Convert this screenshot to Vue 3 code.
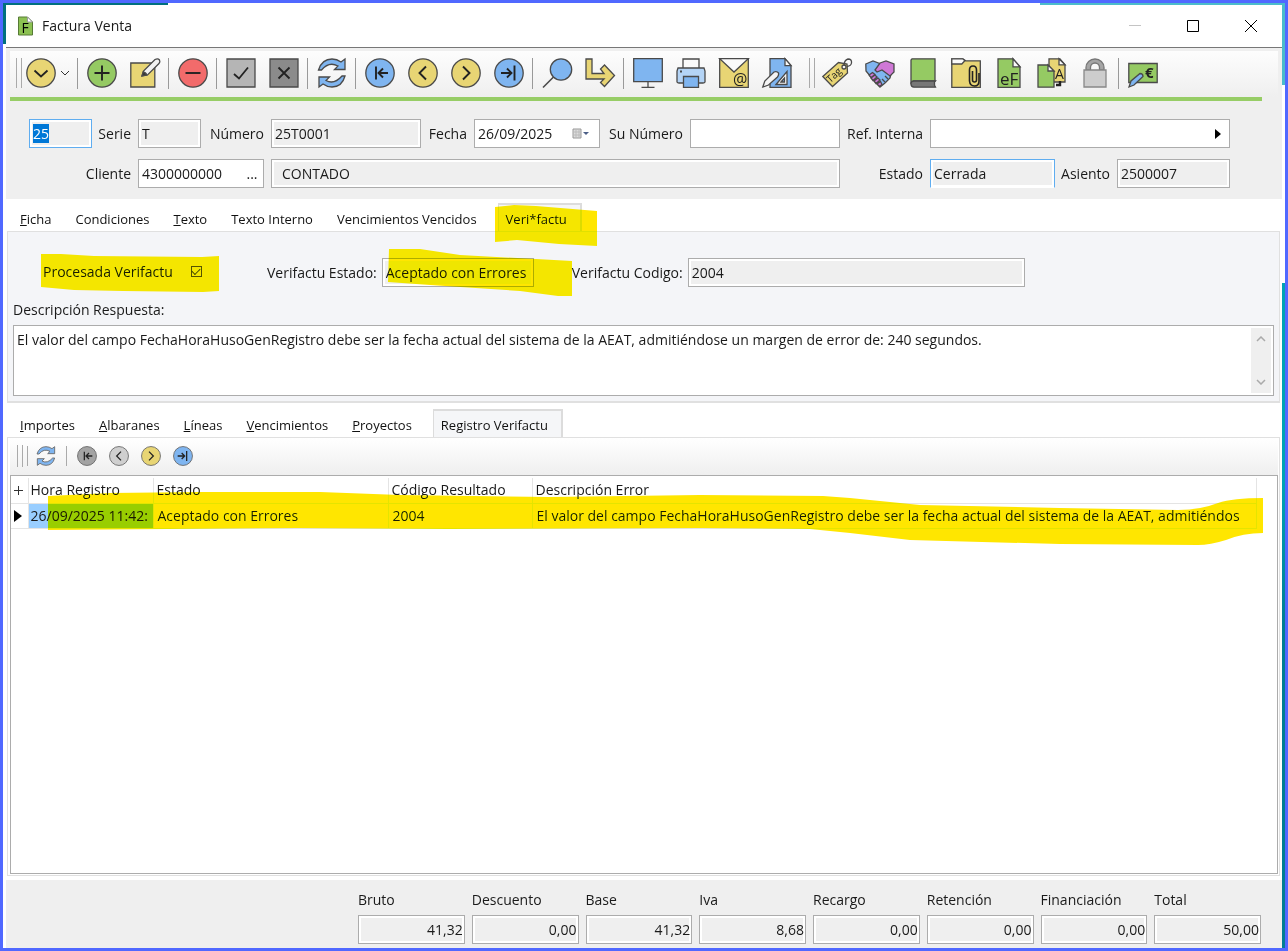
<script setup>
import { ref, onMounted } from 'vue'

const blue = '#7fb5f0'
const yellow = '#e8d574'
const green = '#95ca63'
const disc = (fill, inner) => `<circle cx="15" cy="15" r="14.2" fill="${fill}"/>${inner}`
const firstMark = '<path d="M11 8.500v13M23 15H14M18 10.500l-4.500 4.500 4.500 4.500" stroke="#222" stroke-width="1.900" fill="none"/>'
const lastMark = '<path d="M20.500 7.500v15M7 15h10M13 10.500l4.500 4.500-4.500 4.500" stroke="#222" stroke-width="1.900" fill="none"/>'
const prevMark = '<path d="M18 8.500L11.500 15l6.500 6.500" stroke="#222" stroke-width="1.900" fill="none"/>'
const nextMark = '<path d="M12 8.500l6.500 6.500-6.500 6.500" stroke="#222" stroke-width="1.900" fill="none"/>'

const art = {
  menu: disc(yellow, '<path d="M8.500 12.500l6.500 6 6.500-6" fill="none" stroke="#222" stroke-width="1.800"/>'),
  add: disc(green, '<path d="M15 7.500v15M7.500 15h15" stroke="#222" stroke-width="1.900"/>'),
  edit: `<path d="M.8 5h24v24H.8z" fill="${yellow}"/><path d="M12 18l1.500-5L25 1.500q3-1.500 4.500.5 1 2-.5 3.500L17.500 17z" fill="#f2f2f2"/><path d="M12 18l1.200-4q3 .5 3.500 3z" fill="#333"/>`,
  remove: disc('#f26b6b', '<path d="M7.500 15h15" stroke="#222" stroke-width="1.900"/>'),
  accept: '<path d="M1 1h28v28H1z" fill="#b5b5b5"/><path d="M8 16l5 4.500L22 9.500" fill="none" stroke="#222" stroke-width="1.800"/>',
  cancel: '<path d="M1 1h28v28H1z" fill="#8b8b8b"/><path d="M9.500 9.500l11 11M20.500 9.500l-11 11" stroke="#222" stroke-width="1.800"/>',
  refresh: `<path d="M1.500 12Q5 1 15 1q5 0 9 3l4-3v10.500H17.500l3.500-3.500Q12 3 4.500 12z" fill="${blue}"/><path d="M28 18Q25 29 15 29q-5 0-9-3l-4 3V19h10.500L9 22.500Q17 27 25 18z" fill="${blue}"/>`,
  first: disc(blue, firstMark),
  prev: disc(yellow, prevMark),
  next: disc(yellow, nextMark),
  last: disc(blue, lastMark),
  firstOff: disc('#a3a3a3', firstMark),
  prevOff: disc('#cfcfcf', prevMark),
  search: `<path d="M1 29.500L12 18.500" stroke-width="1.600"/><circle cx="19" cy="11.500" r="10.700" fill="${blue}"/>`,
  jump: `<path d="M1 1h6v14.500h12L15.500 11l4-4L29.500 17.500 19.500 28.500l-4-4 3.500-3.500H1z" fill="${yellow}"/>`,
  screen: `<path d="M.7.700h28.600v23H.7z" fill="${blue}"/><path d="M15 24v5M8.500 29.300h13"/>`,
  print: `<path d="M7 1h16v10H7z" fill="#fafafa"/><path d="M2 10h26l1 3v11q-.5 1-2 1H3q-1.500 0-2-1V13z" fill="#b4d4f6"/><path d="M4 13.500h2" stroke-width="1.800"/><path d="M7.500 18.500h15v10.800h-15z" fill="${blue}"/>`,
  mail: `<path d="M.7.700h28.600v28.600H.7z" fill="${yellow}"/><path d="M.7.700h28.600L15 14z" fill="#fafafa"/><text x="14" y="27" font-size="16">@</text>`,
  design: `<path d="M8 .7h15l6 6.800v21.800H8z" fill="${blue}"/><path d="M23 .7v7h6z" fill="#fafafa"/><path d="M14 26.500L25 13.500v13z" fill="#fafafa"/><path d="M19 24l3.500-4v4z" fill="${blue}"/><path d="M.8 29l2-6L12 14q3-1 4.500 1 .5 2-1 4l-9 8z" fill="#f4f4f4"/>`,
  tag: `<path d="M.8 18.500L16.500 4.500 25 6l.5 9L10.500 28.500z" fill="${yellow}"/><circle cx="22" cy="9" r="2" fill="#f5f5f5"/><path d="M22 8Q22 2 26 1q4 0 3.500 4Q29 8 25 8.500" fill="none"/><text x="5" y="21" font-size="10" transform="rotate(-42 12 19)">Tag</text>`,
  hands: `<path d="M.8 6L8 3l8 3 10 10-1 4-2 2-3 3-5 4-9-10-5-6z" fill="${blue}"/><path d="M20 18l3 3M17 21l3 3" fill="none"/><path d="M15 5l6-2 8 3v8l-4 4-8-6-5 2-2-2z" fill="#cf78d6"/><path d="M4 17l3.500-2.500L10 16.500 6 19.500zM6 20l4-3 2 2-4 3.500zM9 23l4-3 2 2-4 3.500zM12 26l3.500-2.500 1.500 3-2.500 2z" fill="#cf78d6"/>`,
  book: `<path d="M4 .8h23v22H5.500L3 25V2z" fill="${green}"/><path d="M27.500 23H6q-3 0-3 3t3 3.200h21.500l-1-2v-3z" fill="#777"/>`,
  clip: `<path d="M.8.800h11l3 2h14.500v26.500H.8z" fill="${yellow}"/><path d="M.8.800h11l2 2-3 3.200H.8z" fill="#fafafa"/><path d="M28 15v8q0 5-4.500 5T18.500 23V12q0-4 3.500-4t3.500 4v10q0 2-2 2t-2-2V13" fill="none" stroke="#222" stroke-width="1.600"/>`,
  ef: `<path d="M4 .8h15l7 8v20.500H4z" fill="${green}"/><path d="M19 .8v8h7z" fill="#fafafa"/><text x="6" y="27" font-size="17">eF</text>`,
  docs: `<path d="M12 .8h11l5 6V24H12z" fill="${yellow}"/><path d="M22 .8v6h6z" fill="#fafafa"/><path d="M1 7h10l6 6v16.200H1z" fill="${green}"/><path d="M11 7v6h6z" fill="#fafafa"/><text x="18" y="21" font-size="14">A</text><path d="M19 27h4v-4" fill="none" stroke="#222" stroke-width="2.400"/>`,
  lock: '<path d="M6 12V9.500a9 8.500 0 0 1 18 0V12h-4.500V9.500a4.500 4.500 0 0 0-9 0V12z" fill="#a5a5a5" stroke="#777"/><path d="M4 12h22v17H4z" fill="#cdcdcd" stroke="#888"/>',
  pay: `<path d="M.8 5.500h28.400v19H.8z" fill="${green}"/><path d="M1 29l2-6L12 15.500q3 0 3 3L6 27z" fill="${blue}"/><text x="17" y="20" font-size="15" font-weight="bold">€</text>`
}

const tools = [
  ['add', 'Nuevo'], ['edit', 'Editar'], null,
  ['remove', 'Borrar'], null,
  ['accept', 'Aceptar'], ['cancel', 'Cancelar'], null,
  ['refresh', 'Refrescar'], null,
  ['first', 'Primero'], ['prev', 'Anterior'], ['next', 'Siguiente'], ['last', 'Último'], null,
  ['search', 'Buscar'], ['jump', 'Ir a'], null,
  ['screen', 'Pantalla'], ['print', 'Imprimir'], ['mail', 'Correo'], ['design', 'Diseño'], 'grip',
  ['tag', 'Etiquetas'], ['hands', 'Acuerdos'], ['book', 'Libro'], ['clip', 'Adjuntos'], ['ef', 'Factura electrónica'],
  ['docs', 'Documentos'], ['lock', 'Bloquear'], null,
  ['pay', 'Cobrar']
]
const navTools = [['firstOff', 'Primer registro'], ['prevOff', 'Registro anterior'], ['next', 'Registro siguiente'], ['last', 'Último registro']]

const upperTabs = [['F', 'icha'], ['', 'Condiciones'], ['T', 'exto'], ['', 'Texto Interno'], ['', 'Vencimientos Vencidos'], ['', 'Veri*factu']]
const lowerTabs = [['I', 'mportes'], ['A', 'lbaranes'], ['L', 'íneas'], ['V', 'encimientos'], ['P', 'royectos'], ['', 'Registro Verifactu']]
const upper = ref(5)
const lower = ref(5)

const message = 'El valor del campo FechaHoraHusoGenRegistro debe ser la fecha actual del sistema de la AEAT, admitiéndose un margen de error de: 240 segundos.'
const record = {
  time: '26/09/2025 11:42:',
  state: 'Aceptado con Errores',
  code: '2004',
  error: 'El valor del campo FechaHoraHusoGenRegistro debe ser la fecha actual del sistema de la AEAT, admitiéndos'
}
const totals = [
  ['Bruto', '41,32'], ['Descuento', '0,00'], ['Base', '41,32'], ['Iva', '8,68'],
  ['Recargo', '0,00'], ['Retención', '0,00'], ['Financiación', '0,00'], ['Total', '50,00']
]

const yearField = ref(null)
onMounted(() => {
  yearField.value.focus()
  yearField.value.select()
})
</script>

<template>
  <div class="desktop">
    <main class="window">
      <header class="titlebar">
        <svg class="app-icon" viewBox="0 0 16 20"><path d="M1 1h9l5 5v13H1z" fill="#8cc152" stroke="#567a36" /><path d="M10 1v5h5z" fill="#fff" stroke="#999" /><text x="4" y="17" font-size="14">F</text></svg>
        <h1>Factura Venta</h1>
        <div class="controls">
          <button aria-label="Minimizar" disabled><svg viewBox="0 0 12 12"><path d="M0 5.500h12" stroke="#c4c4c4" /></svg></button>
          <button aria-label="Maximizar"><svg viewBox="0 0 12 12"><path d="M.5.500h11v11H.5z" fill="none" stroke="#000" /></svg></button>
          <button aria-label="Cerrar"><svg viewBox="0 0 12 12"><path d="M0 0l12 12M12 0L0 12" stroke="#000" /></svg></button>
        </div>
      </header>

      <section class="head">
        <nav class="toolbar">
          <span class="grip"></span>
          <button class="tool" aria-label="Menú"><svg class="icon" viewBox="0 0 30 30" v-html="art.menu"></svg></button>
          <button class="more" aria-label="Más opciones"><svg viewBox="0 0 10 6"><path d="M1 1l4 4 4-4" fill="none" stroke="#333" /></svg></button>
          <span class="sep"></span>
          <template v-for="(t, i) in tools" :key="i">
            <span v-if="t === null" class="sep"></span>
            <span v-else-if="t === 'grip'" class="grip mid"></span>
            <button v-else class="tool" :aria-label="t[1]"><svg class="icon" viewBox="0 0 30 30" v-html="art[t[0]]"></svg></button>
          </template>
        </nav>
        <div class="rule"></div>

        <form class="fields" @submit.prevent>
          <input ref="yearField" class="box active" aria-label="Ejercicio" value="25" readonly />
          <label for="serie">Serie</label>
          <input id="serie" class="box" value="T" readonly />
          <label for="numero">Número</label>
          <input id="numero" class="box" value="25T0001" readonly />
          <label for="fecha">Fecha</label>
          <div class="combo">
            <input id="fecha" class="box edit" value="26/09/2025" />
            <button class="inner date" aria-label="Abrir calendario"><svg viewBox="0 0 18 12"><path d="M1 1h8v9H1z" fill="#ddd" stroke="#999" /><path d="M1 4h8M1 7h8M4 1v9M7 1v9" stroke="#bbb" /><path d="M11 4h6l-3 3z" fill="#4c5f87" /></svg></button>
          </div>
          <label for="sunumero">Su Número</label>
          <input id="sunumero" class="box edit" />
          <label for="ref">Ref. Interna</label>
          <div class="combo wide">
            <input id="ref" class="box edit" />
            <button class="inner" aria-label="Ver referencia"><svg class="tri" viewBox="0 0 6 10"><path d="M0 0l6 5-6 5z" /></svg></button>
          </div>

          <label class="two" for="cliente">Cliente</label>
          <div class="combo client">
            <input id="cliente" class="box edit" value="4300000000" />
            <button class="inner dots" aria-label="Buscar cliente">...</button>
          </div>
          <input class="box name" aria-label="Nombre del cliente" value="CONTADO" readonly />
          <label for="estado">Estado</label>
          <input id="estado" class="box active open" value="Cerrada" readonly />
          <label for="asiento">Asiento</label>
          <input id="asiento" class="box" value="2500007" readonly />
        </form>
      </section>

      <div class="tabs upper" role="tablist">
        <button v-for="(t, i) in upperTabs" :key="i" role="tab" :aria-selected="upper === i" :class="{ on: upper === i }" @click="upper = i">
          <u>{{ t[0] }}</u>{{ t[1] }}
          <svg v-if="i === 5" class="mark mark-tab" viewBox="0 0 102 41"><path d="M0 2L19 0l22 1 61 5v35l-38-2-42-4-22 2z" /></svg>
        </button>
      </div>

      <section class="panel">
        <div class="status">
          <div class="check">
            <label for="proc">Procesada Verifactu</label>
            <input id="proc" type="checkbox" checked />
            <svg class="mark mark-check" viewBox="0 0 178 39"><path d="M0 0h20l33 2 108 1 17-1v35l-16 1-80-1-49-1-33-3z" /></svg>
          </div>
          <label for="vestado">Verifactu Estado:</label>
          <div class="state">
            <input id="vestado" class="box" value="Aceptado con Errores" readonly />
            <svg class="mark mark-state" viewBox="0 0 184 47"><path d="M1 0h31l40 6 76 4 36 2v35h-14l-38-5-90-6-42-3z" /></svg>
          </div>
          <label for="vcodigo">Verifactu Codigo:</label>
          <input id="vcodigo" class="box code" value="2004" readonly />
        </div>
        <label class="desc" for="resp">Descripción Respuesta:</label>
        <div class="memo">
          <textarea id="resp" :value="message" readonly></textarea>
          <div class="scroll">
            <button aria-label="Subir"><svg viewBox="0 0 10 6"><path d="M1 5l4-4 4 4" /></svg></button>
            <button aria-label="Bajar"><svg viewBox="0 0 10 6"><path d="M1 1l4 4 4-4" /></svg></button>
          </div>
        </div>
      </section>

      <div class="tabs lower" role="tablist">
        <button v-for="(t, i) in lowerTabs" :key="i" role="tab" :aria-selected="lower === i" :class="{ on: lower === i }" @click="lower = i"><u>{{ t[0] }}</u>{{ t[1] }}</button>
      </div>

      <section class="records">
        <nav class="minibar">
          <span class="grip"></span><span class="line"></span>
          <button aria-label="Refrescar registros"><svg class="icon" viewBox="0 0 30 30" v-html="art.refresh"></svg></button>
          <span class="line gap"></span>
          <button v-for="t in navTools" :key="t[0]" :aria-label="t[1]"><svg class="icon" viewBox="0 0 30 30" v-html="art[t[0]]"></svg></button>
        </nav>
        <div class="grid">
          <table>
            <colgroup><col class="c0" /><col class="c1" /><col class="c2" /><col class="c3" /><col /></colgroup>
            <thead>
              <tr><th class="plus"><svg viewBox="0 0 9 9"><path d="M4.500 0v9M0 4.500h9" stroke="#333" /></svg></th><th>Hora Registro</th><th>Estado</th><th>Código Resultado</th><th>Descripción Error</th></tr>
            </thead>
            <tbody>
              <tr><td class="plus"><svg class="current" viewBox="0 0 8 12"><path d="M0 0l8 6-8 6z" /></svg></td><td class="sel">{{ record.time }}</td><td>{{ record.state }}</td><td>{{ record.code }}</td><td>{{ record.error }}</td></tr>
            </tbody>
          </table>
          <svg class="mark mark-row" viewBox="0 0 1215 53" preserveAspectRatio="none"><path d="M0 4L62 1 152 0H272L352 3 502 5 652 3 775 4 802 6 872 13 1012 16 1130 18Q1152 18 1170 11 1185 6 1215 6V41Q1195 41 1178 48 1162 53 1150 53L1012 52 862 48 802 41 762 37 652 36 400 37 250 36 0 38z" /></svg>
        </div>
      </section>

      <footer class="totals">
        <div v-for="t in totals" :key="t[0]">
          <label :for="t[0]">{{ t[0] }}</label>
          <input :id="t[0]" class="box" :value="t[1]" readonly />
        </div>
      </footer>
    </main>
  </div>
</template>

<style>
body { overflow: hidden; }
</style>

<style scoped>
* { box-sizing: border-box; }
.desktop {
  min-height: 100vh;
  display: flex;
  padding: 2px 3px 0 3px;
  border: 3px solid #5068ff;
  background:
    linear-gradient(#fff, #fff) 165px 0 / 872px 2px no-repeat,
    linear-gradient(90deg, #00707f 0 50%, transparent 50%) 0 0 / 100% 41px no-repeat,
    linear-gradient(90deg, #fff 50%, transparent 50%),
    linear-gradient(#4bbccb 0 82px, #fff 82px 280px, #00a3b4 280px 480px, #007e93 620px);
  color: #1a1a1a;
  font: 14px/20px "Open Sans", "Noto Sans", sans-serif;
}
.window { flex: 1; min-width: 0; display: flex; flex-direction: column; background: #fff; }
button { padding: 0; border: 0; background: none; color: inherit; font: inherit; display: flex; align-items: center; justify-content: center; }
svg { display: block; }
.titlebar { display: flex; align-items: center; height: 43px; padding-left: 11px; border-bottom: 1px solid #777; }
.app-icon { width: 17px; height: 20px; }
h1 { flex: 1; margin: 0 0 0 8px; font-size: 14px; font-weight: 400; }
.controls { display: flex; margin-right: 2px; }
.controls button { width: 58px; height: 40px; }
.controls svg { width: 12px; height: 12px; }

.head { background: #efefef; padding: 3px 4px 11px; }
.toolbar { display: flex; align-items: center; height: 46px; padding: 0 0 2px 6px; background: linear-gradient(#fdfdfd, #efefef); }
.grip { width: 6px; height: 30px; margin-right: -3px; border: solid #aaa; border-width: 0 1px; flex: none; }
.grip.mid { margin: 0 0 0 11px; }
.tool { width: 43px; height: 40px; flex: none; }
.icon { width: 30px; height: 30px; overflow: visible; stroke: #4a4a4a; stroke-width: 1.3; }
.icon :deep(text) { fill: #222; stroke: none; }
.more { width: 13px; height: 30px; margin: 0 4px 0 -4px; flex: none; }
.more svg { width: 10px; height: 6px; }
.sep { width: 1px; height: 31px; margin: 0 2px; background: #999; flex: none; }
.rule { height: 4px; margin-right: 16px; background: #97cd66; }
.fields {
  display: grid;
  grid-template-columns: 63fr 46px 63fr 70px 150fr 53px 126fr 90px 150fr 90px 125fr 62px 113fr;
  gap: 11px 0;
  align-items: center;
  padding: 18px 48px 0 19px;
}
label { white-space: nowrap; }
.fields label { padding-right: 7px; text-align: right; }
.box {
  width: 100%;
  min-width: 0;
  height: 29px;
  padding: 0 4px 1px 3px;
  border: 1px solid #acacac;
  border-radius: 0;
  outline: 0;
  background: #efefef;
  box-shadow: inset 0 0 0 2px #fff;
  color: inherit;
  font: inherit;
}
.box.active { border-color: #5fadf0; }
.box.open { border-bottom-color: #fff; }
.box.edit { background: #fff; }
.box::selection { background: #0078d7; color: #fff; }
.combo { position: relative; }
.inner { position: absolute; top: 1px; right: 1px; bottom: 1px; width: 22px; }
.date { right: 8px; }
.date svg { width: 18px; height: 12px; }
.tri { width: 6px; height: 10px; }
.wide { grid-column: span 3; }
.two { grid-column: span 2; }
.client { grid-column: span 2; margin-right: 7px; }
.name { grid-column: span 5; padding-left: 10px; }

.tabs { display: flex; align-items: flex-end; font-size: 13px; line-height: 20px; color: #111; }
.tabs button { position: relative; display: block; height: 28px; padding: 6px 12px 2px; white-space: nowrap; }
.tabs .on { margin-left: 9px; padding: 4px 13px 2px 7px; border: 2px solid #dcdcdc; border-width: 2px 2px 0 1px; background: #f5f6f8; }
.upper { height: 32px; padding-left: 2px; }
.lower { height: 34px; padding-left: 2px; }
.panel { margin: 0 2px 0 1px; padding: 26px 5px 5px; border: 1px solid #e0e0e0; border-bottom-width: 2px; background: #f4f5f8; }
.status { display: flex; align-items: center; }
.check { position: relative; display: flex; align-items: center; width: 224px; margin: 0 0 2px 30px; flex: none; }
.check input { appearance: none; display: grid; place-items: center; width: 11px; height: 11px; margin: 0 0 0 18px; border: 1px solid #555; }
.check input:checked::after { content: ""; width: 7px; height: 4px; margin-bottom: 2px; border: solid #444; border-width: 0 0 1px 1px; rotate: -45deg; }
.state { position: relative; width: 152px; margin: 0 38px 0 5px; flex: none; }
.code { width: 337px; margin-left: 5px; }
.desc { display: block; margin: 13px 0 5px; }
.memo { display: flex; height: 71px; padding: 2px; border: 1px solid #acacac; background: #fff; }
textarea { flex: 1; min-width: 0; padding: 2px 1px; border: 0; outline: 0; resize: none; overflow: hidden; background: #fff; color: inherit; font: inherit; }
.scroll { display: flex; flex-direction: column; justify-content: space-between; width: 20px; background: #efefef; }
.scroll button { height: 22px; }
.scroll svg { width: 10px; height: 6px; fill: none; stroke: #aaa; stroke-width: 1.500; }

.records { flex: 1; display: flex; flex-direction: column; margin: 0 2px 4px 1px; padding: 0 1px 1px 2px; border: 1px solid #e0e0e0; background: #fff; }
.minibar { display: flex; align-items: center; height: 37px; padding: 0 0 2px 7px; background: linear-gradient(#fff, #efefef); }
.minibar .grip { height: 22px; margin: 0 4px 0 0; }
.line { width: 1px; height: 20px; background: #aaa; flex: none; }
.gap { margin: 0 4px 0 1px; }
.minibar button { width: 33px; height: 30px; margin-left: -1px; }
.minibar button:nth-of-type(1) { width: 38px; }
.minibar .icon { width: 20px; height: 20px; stroke: #666; }
.grid { position: relative; flex: 1; border: 1px solid #acacac; background: #fff; padding: 2px 20px 0 0; }
table { width: 100%; table-layout: fixed; border-collapse: collapse; }
.c0 { width: 17px; }
.c1 { width: 125px; }
.c2 { width: 235px; }
.c3 { width: 144px; }
th, td { height: 25px; padding: 0 0 0 3px; border: solid #e4e4e4; border-width: 0 1px 1px 0; overflow: hidden; white-space: nowrap; text-align: left; font-weight: 400; text-overflow: clip; }
td { padding-left: 4px; }
th:nth-child(2), td:nth-child(2) { padding-left: 2px; }
.plus { padding: 0 0 0 3px; }
.plus svg { width: 9px; height: 9px; }
.plus .current { width: 8px; height: 12px; }
.sel { background: #99ceff; }
.mark { position: absolute; fill: #ffe600; mix-blend-mode: darken; pointer-events: none; }
.mark-tab { left: -4px; top: 0; width: 102px; height: 41px; }
.mark-check { left: -2px; top: -8px; width: 178px; height: 39px; }
.mark-state { left: 6px; top: -9px; width: 184px; height: 47px; }
.mark-row { left: 37px; top: 16px; width: calc(100% - 51px); height: 53px; }

.totals { display: grid; grid-template-columns: repeat(8, 1fr); gap: 7px; padding: 10px 21px 4px 352px; background: #efefef; }
.totals label { display: block; margin-bottom: 5px; }
.totals .box { padding-right: 1px; text-align: right; }
</style>
